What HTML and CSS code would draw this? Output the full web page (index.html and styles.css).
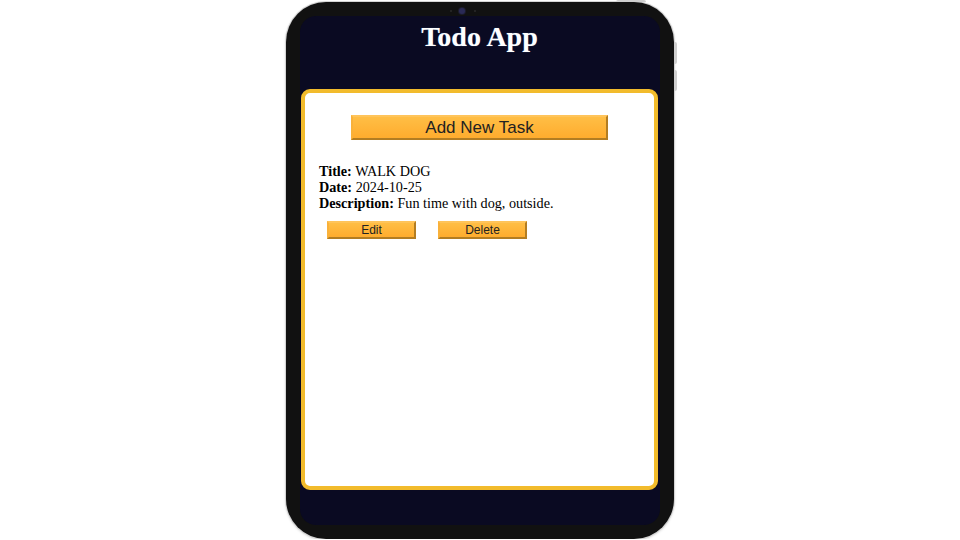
FILE: index.html
```html
<!DOCTYPE html>
<html lang="en">
<head>
    <meta charset="UTF-8">
    <meta name="viewport" content="width=device-width, initial-scale=1.0">
    <title>Todo App</title>
    <link rel="stylesheet" href="styles.css">
</head>
<body>

    <div class="tablet">
        <span class="camera"></span>
        <span class="sensor sensor-left"></span>
        <span class="sensor sensor-right"></span>
        <span class="side-btn top-btn"></span>
        <span class="side-btn vol-up"></span>
        <span class="side-btn vol-down"></span>

        <div class="screen">
            <h1>Todo App</h1>

            <div class="card">
                <button class="add-btn">Add New Task</button>

                <div class="task">
                    <div><b>Title:</b> WALK DOG</div>
                    <div><b>Date:</b> 2024-10-25</div>
                    <div><b>Description:</b> Fun time with dog, outside.</div>

                    <div class="actions">
                        <button class="small-btn">Edit</button>
                        <button class="small-btn">Delete</button>
                    </div>
                </div>
            </div>
        </div>
    </div>

</body>
</html>
```

FILE: styles.css
```css
body {
    margin: 0;
    background: #fff;
    font-family: "Liberation Serif", "Times New Roman", serif;
    display: flex;
    justify-content: center;
}
.tablet {
    position: relative;
    width: 388px;
    height: 537px;
    margin-top: 2px;
    padding: 14px;
    box-sizing: border-box;
    background: #111;
    border-radius: 40px;
    box-shadow: 0 0 0 1px #d4d4d4, 0 1px 3px rgba(0,0,0,0.25);
}
.camera {
    position: absolute;
    top: 6px;
    left: 173px;
    width: 6px;
    height: 6px;
    border-radius: 50%;
    background: #2a2a55;
    box-shadow: 0 0 0 1px #1c1c2c;
}
.sensor {
    position: absolute;
    top: 8px;
    width: 2px;
    height: 2px;
    border-radius: 50%;
    background: #2a2a2a;
}
.sensor-left { left: 164px; }
.sensor-right { left: 188px; }
.side-btn {
    position: absolute;
    background: #cfcfcf;
}
.top-btn {
    top: -2px;
    left: 330px;
    width: 30px;
    height: 2px;
    border-radius: 2px 2px 0 0;
}
.vol-up {
    top: 40px;
    right: -3px;
    width: 3px;
    height: 22px;
    border-radius: 0 2px 2px 0;
}
.vol-down {
    top: 68px;
    right: -3px;
    width: 3px;
    height: 21px;
    border-radius: 0 2px 2px 0;
}
.screen {
    height: 100%;
    background: #0a0a22;
    border-radius: 16px;
    padding: 5px 2px 0 1px;
    box-sizing: border-box;
    display: flex;
    flex-direction: column;
}
h1 {
    margin: 0;
    color: #fff;
    font-size: 28px;
    line-height: 32px;
    text-align: center;
    text-shadow: 0 0 1px rgba(120,190,255,0.6);
}
.card {
    margin-top: 36px;
    height: 401px;
    box-sizing: border-box;
    background: #fff;
    border: 4px solid #f2bb2c;
    border-radius: 9px;
    padding: 22px 14px;
}
.add-btn {
    display: block;
    width: 257px;
    height: 25px;
    margin: 0 auto;
    padding: 0;
    font-family: "Liberation Sans", Arial, sans-serif;
    font-size: 17px;
    color: #222;
    background: linear-gradient(#ffbe45, #ffac2e);
    border: 2px solid;
    border-color: #ffc45a #b37d22 #b37d22 #f9b13a;
}
.task {
    margin-top: 23px;
    font-size: 14.2px;
    line-height: 16px;
    color: #000;
}
.actions {
    display: flex;
    gap: 22px;
    margin: 10px 0 0 8px;
}
.small-btn {
    width: 89px;
    height: 18px;
    padding: 0;
    font-family: "Liberation Sans", Arial, sans-serif;
    font-size: 12px;
    color: #222;
    background: linear-gradient(#ffbe45, #ffac2e);
    border: 2px solid;
    border-color: #ffc45a #b37d22 #b37d22 #f9b13a;
}
```
